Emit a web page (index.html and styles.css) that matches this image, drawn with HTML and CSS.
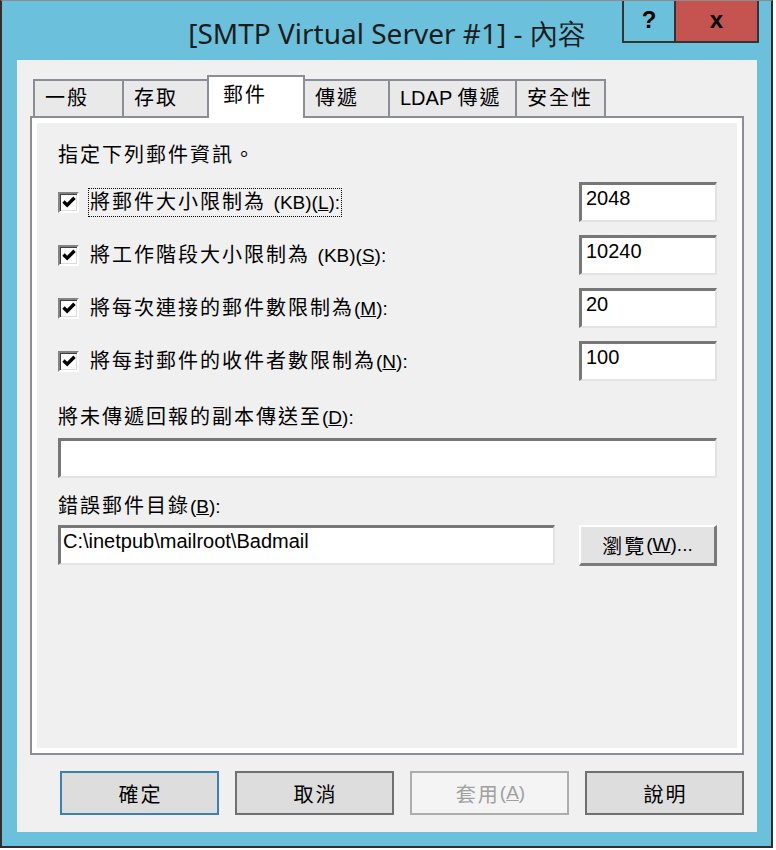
FILE: index.html
```html
<!DOCTYPE html>
<html lang="zh-Hant">
<head>
<meta charset="utf-8">
<title>[SMTP Virtual Server #1] - 內容</title>
<link rel="stylesheet" href="styles.css">
</head>
<body>
<div class="window">
  <div class="titlebar">
    <div class="title">[SMTP Virtual Server #1] - 內容</div>
    <div class="caption">
      <div class="cap help">?</div>
      <div class="cap close">x</div>
    </div>
  </div>
  <div class="client">
    <div class="tabs">
      <div class="tab w91">一般</div>
      <div class="tab w87">存取</div>
      <div class="tab sel">郵件</div>
      <div class="tab w87">傳遞</div>
      <div class="tab w129"><span class="lat">LDAP </span>傳遞</div>
      <div class="tab w91">安全性</div>
    </div>
    <div class="panel">
      <div class="panel-inner">
        <div class="heading">指定下列郵件資訊。</div>
        <div class="row">
          <span class="check"><svg width="14" height="12" viewBox="0 0 14 12"><path d="M1.5 5.5 L5.2 9.2 L12.5 1.8" fill="none" stroke="#000" stroke-width="3.4"/></svg></span>
          <span class="label focus">將郵件大小限制為 <span class="lat">(KB)(<u>L</u>):</span></span>
          <div class="field num">2048</div>
        </div>
        <div class="row">
          <span class="check"><svg width="14" height="12" viewBox="0 0 14 12"><path d="M1.5 5.5 L5.2 9.2 L12.5 1.8" fill="none" stroke="#000" stroke-width="3.4"/></svg></span>
          <span class="label">將工作階段大小限制為 <span class="lat">(KB)(<u>S</u>):</span></span>
          <div class="field num">10240</div>
        </div>
        <div class="row">
          <span class="check"><svg width="14" height="12" viewBox="0 0 14 12"><path d="M1.5 5.5 L5.2 9.2 L12.5 1.8" fill="none" stroke="#000" stroke-width="3.4"/></svg></span>
          <span class="label">將每次連接的郵件數限制為<span class="lat">(<u>M</u>):</span></span>
          <div class="field num">20</div>
        </div>
        <div class="row">
          <span class="check"><svg width="14" height="12" viewBox="0 0 14 12"><path d="M1.5 5.5 L5.2 9.2 L12.5 1.8" fill="none" stroke="#000" stroke-width="3.4"/></svg></span>
          <span class="label">將每封郵件的收件者數限制為<span class="lat">(<u>N</u>):</span></span>
          <div class="field num">100</div>
        </div>
        <div class="field-label first">將未傳遞回報的副本傳送至<span class="lat">(<u>D</u>):</span></div>
        <div class="field wide"></div>
        <div class="field-label second">錯誤郵件目錄<span class="lat">(<u>B</u>):</span></div>
        <div class="path-row">
          <div class="field path">C:\inetpub\mailroot\Badmail</div>
          <div class="browse">瀏覽<span class="lat">(<u>W</u>)...</span></div>
        </div>
      </div>
    </div>
    <div class="buttons">
      <div class="btn default">確定</div>
      <div class="btn">取消</div>
      <div class="btn disabled">套用<span class="lat">(<u>A</u>)</span></div>
      <div class="btn">說明</div>
    </div>
  </div>
</div>
</body>
</html>
```
FILE: styles.css
```css
* { box-sizing: border-box; }

body {
  margin: 0;
  background: #ffffff;
  font-family: "Liberation Sans", "Noto Sans CJK TC", sans-serif;
  font-size: 20px;
  letter-spacing: 2px;
  color: #000;
}

.lat {
  font-family: "Liberation Sans", sans-serif;
  font-size: 19px;
  letter-spacing: 0;
}

.window {
  width: 773px;
  height: 848px;
  background: #6bc1dc;
  border-left: 2px solid #342b2b;
  border-right: 2px solid #342b2b;
  border-bottom: 2px solid #342b2b;
  border-top: 1px solid #8c8c8c;
  padding: 0 14px 0 15px;
}

.titlebar {
  height: 59px;
  position: relative;
}

.title {
  text-align: center;
  font-family: "Noto Sans", sans-serif;
  font-size: 28px;
  letter-spacing: 0;
  line-height: 38px;
  padding-top: 13px;
  color: #1c1c1c;
}

.caption {
  position: absolute;
  top: 0;
  right: -2px;
  display: flex;
}

.cap {
  height: 42px;
  border: 2px solid #333;
  border-top: 0;
  display: flex;
  align-items: center;
  justify-content: center;
  font-family: "Liberation Sans", sans-serif;
  font-weight: bold;
  font-size: 24px;
  letter-spacing: 0;
  padding-bottom: 3px;
}

.help {
  width: 52px;
  border-right: 0;
}

.close {
  width: 85px;
  background: #c55450;
}

.client {
  height: 772px;
  background: #f0f0f0;
  padding: 15px 13px 0 13px;
}

.tabs {
  display: flex;
  align-items: flex-end;
  height: 43px;
  padding-left: 3px;
  margin-bottom: -2px;
  position: relative;
  z-index: 1;
}

.tab {
  height: 37px;
  margin-bottom: 2px;
  margin-left: -2px;
  border: 2px solid #8b8e96;
  border-bottom: 0;
  background: #e9e9e9;
  line-height: 35px;
  padding-left: 10px;
  white-space: nowrap;
}

.tab:first-child { margin-left: 0; }
.tab .lat { font-size: 20px; }

.w91 { width: 91px; }
.w87 { width: 87px; }
.w129 { width: 129px; }

.tab.sel {
  width: 98px;
  height: 43px;
  margin-bottom: 0;
  background: #fff;
  line-height: 36px;
  padding-left: 14px;
  position: relative;
  z-index: 1;
}

.panel {
  height: 639px;
  border: 2px solid #8b8e96;
}

.panel-inner {
  height: 100%;
  border: 5px solid #fff;
  padding: 0 20px 0 21px;
}

.heading {
  margin-top: 18px;
  line-height: 28px;
}

.row {
  display: flex;
  align-items: center;
  height: 40px;
  margin-top: 13px;
}

.check {
  width: 21px;
  height: 21px;
  flex: none;
  background: #fff;
  border-style: solid;
  border-width: 2px;
  border-color: #838383 #fff #fff #838383;
  box-shadow: inset 1px 1px 0 #3f3f3f, inset -1px -1px 0 #dcdcdc;
  display: flex;
  align-items: center;
  justify-content: center;
  margin-right: 10px;
}

.label {
  display: inline-block;
  line-height: 27px;
  padding: 0 1px;
  white-space: nowrap;
}

.focus {
  outline: 1px dotted #000;
}

.field {
  background: #fff;
  border-style: solid;
  border-width: 3px 2px 2px 3px;
  border-color: #777 #e3e3e3 #e3e3e3 #777;
  height: 40px;
  padding: 1px 4px;
  line-height: 24px;
  letter-spacing: 0;
  white-space: nowrap;
}

.num {
  width: 138px;
  margin-left: auto;
}

.field-label {
  line-height: 28px;
}
.field-label.first { margin-top: 22px; }
.field-label.second { margin-top: 14px; }

.wide { margin-top: 6px; }

.path-row {
  display: flex;
  justify-content: space-between;
  margin-top: 4px;
}

.path {
  width: 497px;
  padding-left: 2px;
}

.browse {
  width: 138px;
  height: 41px;
  border-style: solid;
  border-width: 2px 3px 3px 2px;
  border-color: #fff #7a7a7a #7a7a7a #fff;
  background: #e3e3e3;
  display: flex;
  align-items: center;
  justify-content: center;
  white-space: nowrap;
}

.buttons {
  display: flex;
  justify-content: flex-end;
  gap: 16px;
  margin-top: 16px;
}

.btn {
  width: 159px;
  height: 44px;
  border: 2px solid #707070;
  background: #dddddd;
  display: flex;
  align-items: center;
  justify-content: center;
  padding-left: 2px;
  white-space: nowrap;
}

.btn.default { border-color: #3c7fb1; }

.btn.disabled {
  border-color: #adadad;
  background: #f4f4f4;
  color: #a0a0a0;
}
```
